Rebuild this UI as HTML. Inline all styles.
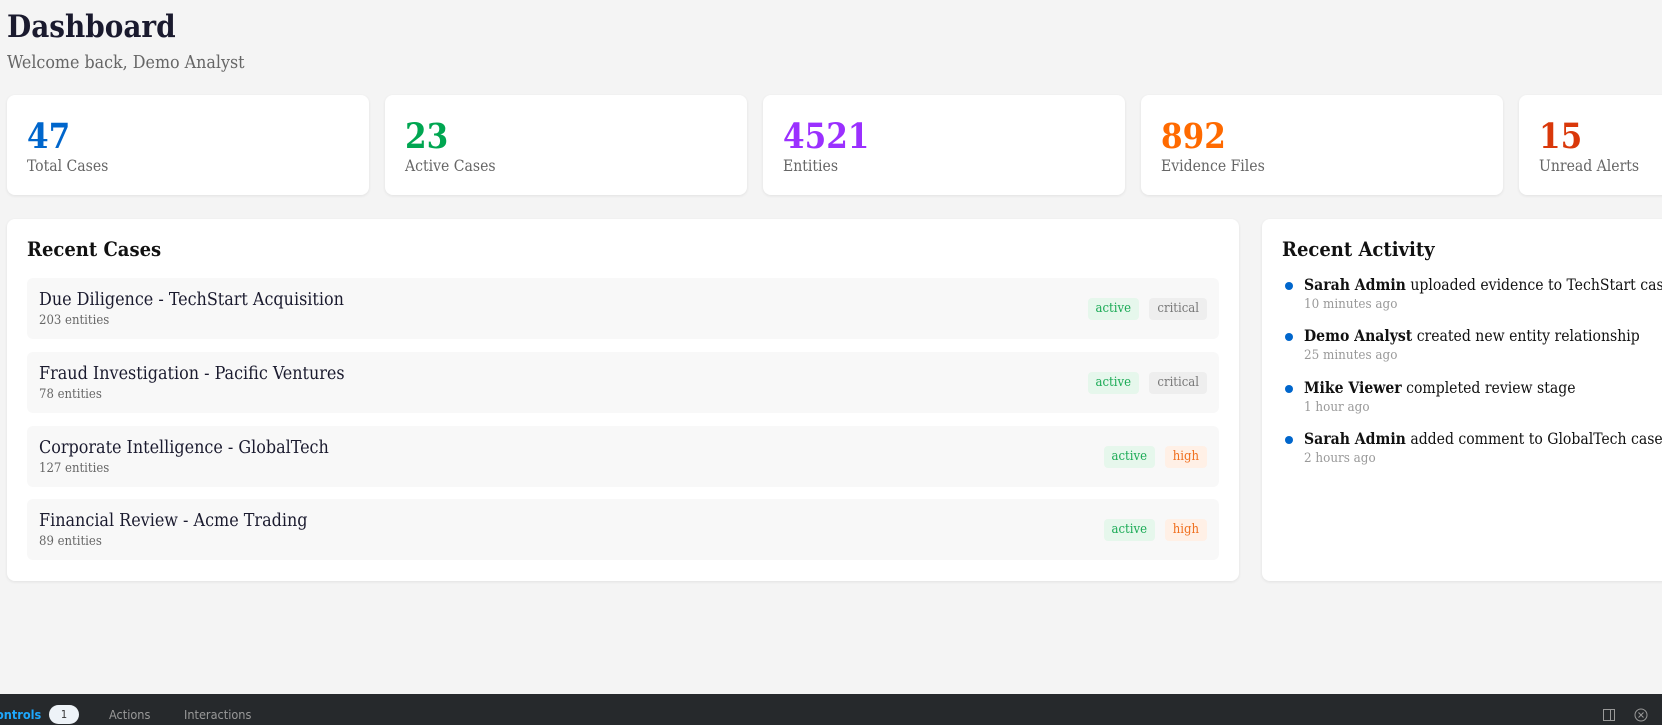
<!DOCTYPE html>
<html><head><meta charset="utf-8"><style>
*{box-sizing:border-box;margin:0;padding:0}
body{width:1662px;height:725px;overflow:hidden;background:#f4f4f4;font-family:"DejaVu Serif Condensed","DejaVu Serif",serif;font-stretch:condensed;position:relative}
.abs{position:absolute}
h1{position:absolute;left:7px;top:9px;font-size:31px;font-weight:bold;color:#1a1a2e}
.sub{left:7px;top:53px;font-size:17.7px;color:#666}
.card{position:absolute;top:95px;width:362px;height:100px;background:#fff;border-radius:8px;box-shadow:0 1px 3px rgba(0,0,0,.08)}
.card .n{position:absolute;left:20px;top:22px;font-size:34.5px;font-weight:bold}
.card .l{position:absolute;left:20px;top:62px;font-size:15.6px;color:#666}
.panel{position:absolute;top:219px;height:362px;background:#fff;border-radius:8px;box-shadow:0 1px 3px rgba(0,0,0,.08)}
.ph{position:absolute;left:20px;top:18px;font-size:20px;font-weight:bold;color:#111}
.row{position:absolute;left:20px;width:1192px;height:61px;background:#f8f8f8;border-radius:6px}
.row .t{position:absolute;left:12px;top:11px;font-size:17.8px;color:#1a1a2e}
.row .s{position:absolute;left:12px;top:35px;font-size:13px;color:#666}
.b{position:absolute;top:20px;height:22px;line-height:22px;padding:0 8px;border-radius:4px;font-size:13px}
.ac{background:#e6f7ec;color:#1aaa55}
.cr{background:#eee;color:#777}
.hi{background:#fff0e6;color:#f07020}
.it{position:absolute;left:42px;font-size:15.6px;color:#111;white-space:nowrap}
.it b{font-weight:bold}
.it .tm{font-size:13.3px;color:#999;margin-top:3px}
.dot{position:absolute;left:-19px;top:7px;width:8px;height:8px;border-radius:50%;background:#0066cc}
.bar{position:absolute;left:0;top:694px;width:1662px;height:31px;background:#26292c;font-family:"DejaVu Sans Condensed","DejaVu Sans",sans-serif;font-stretch:condensed;font-size:12.6px;color:#999}
</style></head><body>
<h1>Dashboard</h1>
<div class="abs sub">Welcome back, Demo Analyst</div>
<div class="card" style="left:7px"><div class="n" style="color:#0066cc">47</div><div class="l">Total Cases</div></div>
<div class="card" style="left:385px"><div class="n" style="color:#00a651">23</div><div class="l">Active Cases</div></div>
<div class="card" style="left:763px"><div class="n" style="color:#9b30ff">4521</div><div class="l">Entities</div></div>
<div class="card" style="left:1141px"><div class="n" style="color:#ff6a00">892</div><div class="l">Evidence Files</div></div>
<div class="card" style="left:1519px"><div class="n" style="color:#d9380a">15</div><div class="l">Unread Alerts</div></div>

<div class="panel" style="left:7px;width:1232px">
<div class="ph">Recent Cases</div>
<div class="row" style="top:59px"><div class="t">Due Diligence - TechStart Acquisition</div><div class="s">203 entities</div><span class="b ac" style="right:80px">active</span><span class="b cr" style="right:12px">critical</span></div>
<div class="row" style="top:133px"><div class="t">Fraud Investigation - Pacific Ventures</div><div class="s">78 entities</div><span class="b ac" style="right:80px">active</span><span class="b cr" style="right:12px">critical</span></div>
<div class="row" style="top:207px"><div class="t">Corporate Intelligence - GlobalTech</div><div class="s">127 entities</div><span class="b ac" style="right:64px">active</span><span class="b hi" style="right:12px">high</span></div>
<div class="row" style="top:280px"><div class="t">Financial Review - Acme Trading</div><div class="s">89 entities</div><span class="b ac" style="right:64px">active</span><span class="b hi" style="right:12px">high</span></div>
</div>

<div class="panel" style="left:1262px;width:500px">
<div class="ph">Recent Activity</div>
<div class="it" style="top:56px"><span class="dot"></span><b>Sarah Admin</b> uploaded evidence to TechStart case<div class="tm">10 minutes ago</div></div>
<div class="it" style="top:107px"><span class="dot"></span><b>Demo Analyst</b> created new entity relationship<div class="tm">25 minutes ago</div></div>
<div class="it" style="top:159px"><span class="dot"></span><b>Mike Viewer</b> completed review stage<div class="tm">1 hour ago</div></div>
<div class="it" style="top:210px"><span class="dot"></span><b>Sarah Admin</b> added comment to GlobalTech case<div class="tm">2 hours ago</div></div>
</div>

<div class="bar">
<span class="abs" style="left:-4px;top:13px;color:#1ea7fd;font-weight:bold">ontrols</span>
<span class="abs" style="left:49px;top:11px;width:30px;height:19px;border-radius:10px;background:#eef3f8;color:#333;font-size:11px;text-align:center;line-height:19px">1</span>
<span class="abs" style="left:109px;top:13px">Actions</span>
<span class="abs" style="left:184px;top:13px">Interactions</span>
<svg class="abs" style="left:1602px;top:14px" width="14" height="14" viewBox="0 0 14 14"><rect x="1.5" y="1.5" width="11" height="11" fill="none" stroke="#999"/><line x1="8.5" y1="1.5" x2="8.5" y2="12.5" stroke="#999"/></svg>
<svg class="abs" style="left:1634px;top:14px" width="14" height="14" viewBox="0 0 14 14"><circle cx="7" cy="7" r="6" fill="none" stroke="#999"/><path d="M4.5 4.5l5 5M9.5 4.5l-5 5" stroke="#999"/></svg>
</div>
</body></html>
